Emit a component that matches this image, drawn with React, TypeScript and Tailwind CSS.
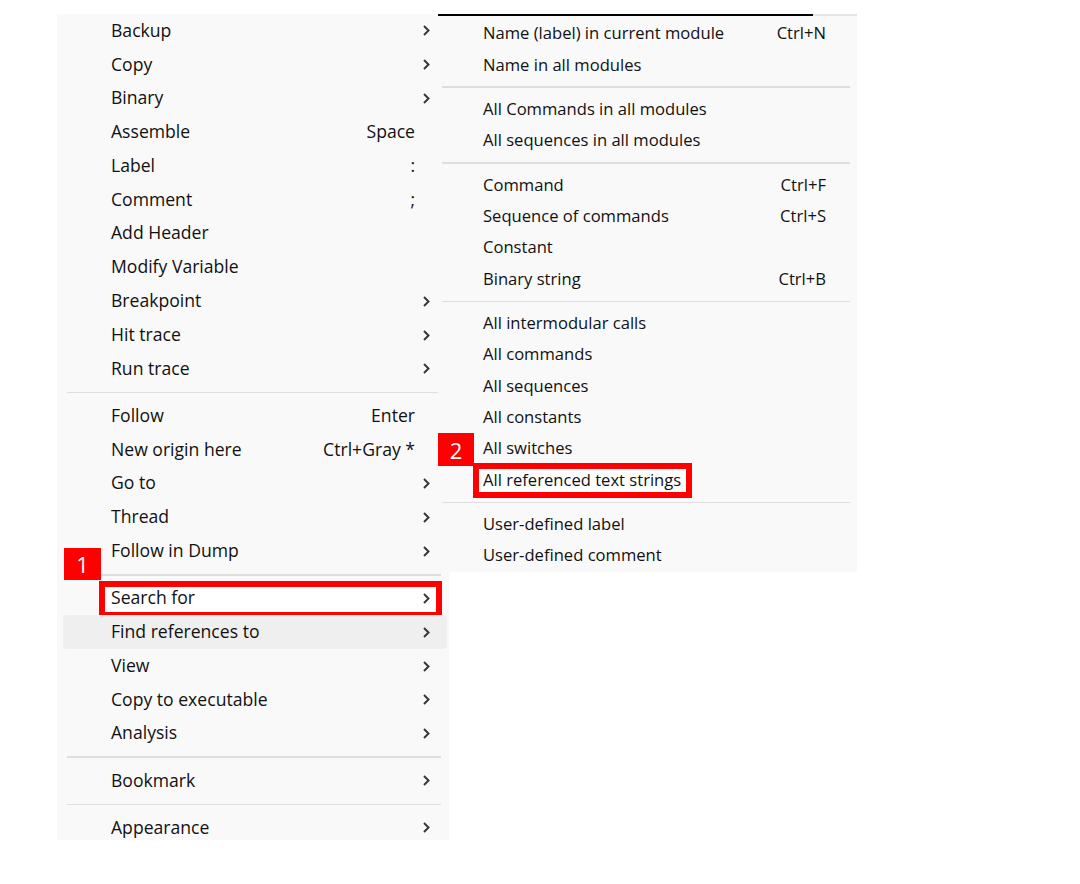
import React from 'react';

type Item =
  | { kind: 'sep' }
  | { kind: 'item'; label: string; shortcut?: string; sub?: boolean; hover?: boolean; boxed?: boolean };

const sep: Item = { kind: 'sep' };
const it = (label: string, opts: Partial<Omit<Extract<Item, { kind: 'item' }>, 'kind' | 'label'>> = {}): Item => ({
  kind: 'item',
  label,
  ...opts,
});

const mainItems: Item[] = [
  it('Backup', { sub: true }),
  it('Copy', { sub: true }),
  it('Binary', { sub: true }),
  it('Assemble', { shortcut: 'Space' }),
  it('Label', { shortcut: ':' }),
  it('Comment', { shortcut: ';' }),
  it('Add Header'),
  it('Modify Variable'),
  it('Breakpoint', { sub: true }),
  it('Hit trace', { sub: true }),
  it('Run trace', { sub: true }),
  sep,
  it('Follow', { shortcut: 'Enter' }),
  it('New origin here', { shortcut: 'Ctrl+Gray *' }),
  it('Go to', { sub: true }),
  it('Thread', { sub: true }),
  it('Follow in Dump', { sub: true }),
  sep,
  it('Search for', { sub: true, boxed: true }),
  it('Find references to', { sub: true, hover: true }),
  it('View', { sub: true }),
  it('Copy to executable', { sub: true }),
  it('Analysis', { sub: true }),
  sep,
  it('Bookmark', { sub: true }),
  sep,
  it('Appearance', { sub: true }),
];

const searchItems: Item[] = [
  it('Name (label) in current module', { shortcut: 'Ctrl+N' }),
  it('Name in all modules'),
  sep,
  it('All Commands in all modules'),
  it('All sequences in all modules'),
  sep,
  it('Command', { shortcut: 'Ctrl+F' }),
  it('Sequence of commands', { shortcut: 'Ctrl+S' }),
  it('Constant'),
  it('Binary string', { shortcut: 'Ctrl+B' }),
  sep,
  it('All intermodular calls'),
  it('All commands'),
  it('All sequences'),
  it('All constants'),
  it('All switches'),
  it('All referenced text strings', { boxed: true }),
  sep,
  it('User-defined label'),
  it('User-defined comment'),
];

const Chevron = () => (
  <svg width="9" height="13" viewBox="0 0 9 13" className="block">
    <polyline points="2,2 6.5,6.5 2,11" fill="none" stroke="#383838" strokeWidth="2" strokeLinejoin="miter" />
  </svg>
);

const Badge = ({ n, className }: { n: string; className: string }) => (
  <div
    className={`absolute z-20 flex items-center justify-center bg-[#ff0000] text-white text-[22px] leading-none ${className}`}
  >
    {n}
  </div>
);

const MainMenu = () => (
  <div className="relative w-[392px] h-[826px] shrink-0 bg-[#f9f9f9] text-[17.6px]">
    <div className="h-[826px] overflow-hidden">
      {mainItems.map((item, i) =>
        item.kind === 'sep' ? (
          <div key={i} className="h-[13.4px] flex items-center pl-[10px] pr-[8px]">
            <div className="h-[1.5px] w-full bg-[#dedede]" />
          </div>
        ) : (
          <div
            key={i}
            className={`relative h-[33.8px] ml-[6px] mr-[2px] pl-[48px] pr-[16px] flex items-center rounded-[4px] ${
              item.hover ? 'bg-[#efefef]' : ''
            }`}
          >
            {item.boxed && (
              <div className="absolute left-[36px] right-[5px] top-[-1px] bottom-[-3px] border-[6px] border-[#ff0000] bg-white" />
            )}
            <span className="relative flex-1 -mt-[2px]">{item.label}</span>
            {item.shortcut && <span className="relative -mt-[2px]">{item.shortcut}</span>}
            <span className="relative w-[16px] flex justify-end">{item.sub && <Chevron />}</span>
          </div>
        ),
      )}
    </div>
    <Badge n="1" className="left-[7px] top-[534px] w-[37px] h-[32px]" />
  </div>
);

const SearchMenu = () => (
  <div className="relative z-10 w-[419px] -ml-[11px] shrink-0 self-start bg-[#f9f9f9] text-[16.6px]">
    <div className="flex h-[2px]">
      <div className="w-[375px] bg-black" />
      <div className="flex-1 bg-[#e6e6e6]" />
    </div>
    <div className="h-[2px]" />
    {searchItems.map((item, i) =>
      item.kind === 'sep' ? (
        <div key={i} className="h-[13.2px] flex items-center pl-[4px] pr-[7px]">
          <div className="h-[1.5px] w-full bg-[#dedede]" />
        </div>
      ) : (
        <div key={i} className="relative h-[31.3px] pl-[45px] pr-[31px] flex items-center">
          {item.boxed && (
            <div className="absolute left-[35px] w-[219px] top-[-1px] h-[35px] border-[6px] border-[#ff0000] bg-white" />
          )}
          <span className="relative flex-1">{item.label}</span>
          {item.shortcut && <span className="relative">{item.shortcut}</span>}
        </div>
      ),
    )}
    <Badge n="2" className="left-0 top-[419px] w-[36px] h-[33px]" />
  </div>
);

export default function App() {
  return (
    <div
      className="w-[1080px] h-[884px] bg-white pt-[14px] pl-[57px] flex items-start text-[#111] font-medium overflow-hidden"
      style={{ fontFamily: '"Open Sans", "Noto Sans", sans-serif' }}
    >
      <MainMenu />
      <SearchMenu />
    </div>
  );
}
